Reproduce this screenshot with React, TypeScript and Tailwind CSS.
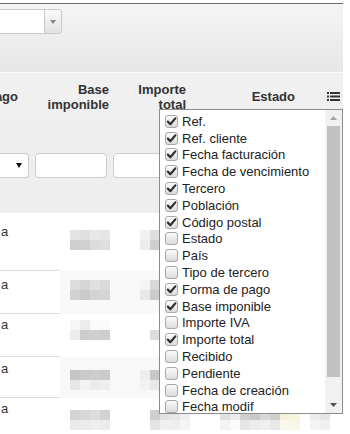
import React from "react";

const ITEMS: [string, boolean][] = [
  ["Ref.", true],
  ["Ref. cliente", true],
  ["Fecha facturación", true],
  ["Fecha de vencimiento", true],
  ["Tercero", true],
  ["Población", true],
  ["Código postal", true],
  ["Estado", false],
  ["País", false],
  ["Tipo de tercero", false],
  ["Forma de pago", true],
  ["Base imponible", true],
  ["Importe IVA", false],
  ["Importe total", true],
  ["Recibido", false],
  ["Pendiente", false],
  ["Fecha de creación", false],
  ["Fecha modif", false],
];

type Row = {
  h: string;
  bg: string;
  textPt: string;
  blkPt: string;
  groups: { ml: string; cells: string[][] }[];
};

const ROWS: Row[] = [
  {
    h: "h-[58px]",
    bg: "bg-white",
    textPt: "pt-[11px]",
    blkPt: "pt-[17px]",
    groups: [
      { ml: "ml-[10px]", cells: [["#e3e3e3", "#e0e0e0", "#e8e8e8", "#e5e5e5"], ["#cecece", "#d0d0d0", "#dcdcdc", "#dedede"]] },
      { ml: "ml-[30px]", cells: [["#f2f2f2", "#dedede", "#e4e4e4", "#ececec"], ["#ececec", "#cfcfcf", "#dadada", "#e6e6e6"]] },
      { ml: "ml-[40px]", cells: [["#e6e6e6", "#dddddd", "#d6d6d6", "#e2e2e2"], ["#f0f0f0", "#e9e9e9", "#e4e4e4", "#eeeeee"]] },
    ],
  },
  {
    h: "h-[43px]",
    bg: "bg-[#f8f8f8]",
    textPt: "pt-[6px]",
    blkPt: "pt-[9px]",
    groups: [
      { ml: "ml-[10px]", cells: [["#dcdcdc", "#d5d5d5", "#e0e0e0", "#dadada"], ["#d2d2d2", "#cbcbcb", "#d6d3d0", "#d5d5d5"]] },
      { ml: "ml-[30px]", cells: [["#f4f4f4", "#d8d8d8", "#e2e2e2", "#ececec"], ["#e8e8e8", "#cccccc", "#d9d9d9", "#e4e4e4"]] },
      { ml: "ml-[40px]", cells: [["#e6e6e6", "#dddddd", "#d6d6d6", "#e2e2e2"], ["#f0f0f0", "#e9e9e9", "#e4e4e4", "#eeeeee"]] },
    ],
  },
  {
    h: "h-[43px]",
    bg: "bg-white",
    textPt: "pt-[3px]",
    blkPt: "pt-[6px]",
    groups: [
      { ml: "ml-[10px]", cells: [["#f6f6f6", "#ececec", "#fafafa", "#fafafa"], ["#ececec", "#cccccc", "#cfcfcf", "#cdcdcd"]] },
      { ml: "ml-[40px]", cells: [["#ffffff", "#f0f0f0", "#f2f2f2", "#f6f6f6"], ["#dddddd", "#e6e6e6", "#ececec", "#f0f0f0"]] },
      { ml: "ml-[30px]", cells: [["#e6e6e6", "#dddddd", "#d6d6d6", "#e2e2e2"], ["#f0f0f0", "#e9e9e9", "#e4e4e4", "#eeeeee"]] },
    ],
  },
  {
    h: "h-[41px]",
    bg: "bg-[#f8f8f8]",
    textPt: "pt-[4px]",
    blkPt: "pt-[13px]",
    groups: [
      { ml: "ml-[10px]", cells: [["#c6c6c6", "#c9c9c9", "#cdcbcb", "#cacaca"], ["#e6e6e6", "#f2f2f2", "#ebebeb", "#eeeeee"]] },
      { ml: "ml-[30px]", cells: [["#eeeeee", "#c8c8c8", "#d8d8d8", "#e2e2e2"], ["#f2f2f2", "#e8e8e8", "#ececec", "#f0f0f0"]] },
      { ml: "ml-[40px]", cells: [["#e6e6e6", "#dddddd", "#d6d6d6", "#e2e2e2"], ["#f0f0f0", "#e9e9e9", "#e4e4e4", "#eeeeee"]] },
    ],
  },
  {
    h: "h-[40px]",
    bg: "bg-white",
    textPt: "pt-[3px]",
    blkPt: "pt-[12px]",
    groups: [
      { ml: "ml-[10px]", cells: [["#d4d4d4", "#d7d7d7", "#dcdcdc", "#d2d2d2"], ["#eaeaea", "#ebebeb", "#eeeeee", "#ebebeb"]] },
      { ml: "ml-[40px]", cells: [["#cfcfcf", "#e2e2e2", "#e6e6e6", "#efefef"], ["#e4e4e4", "#f0f0f0", "#eeeeee", "#f4f4f4"]] },
      {
        ml: "ml-[30px]",
        cells: [
          ["#e0e0e0", "#ececec", "#d0d0d0", "#c8c8c8", "#d8d8d8", "#cfcfcf", "#f5f2dc", "#f6f3de"],
          ["#f3f3f3", "#fafafa", "#e6e6e6", "#ececec", "#efefef", "#e8e8e8", "#faf8ea", "#f8f6e6"],
        ],
      },
      { ml: "ml-[10px]", cells: [["#ececec", "#e4e4e4"], ["#f4f4f4", "#f0f0f0"]] },
    ],
  },
];

function Blocks({ cells }: { cells: string[][] }) {
  return (
    <div className="flex flex-col">
      {cells.map((r, i) => (
        <div key={i} className="flex">
          {r.map((c, j) => (
            <div key={j} className="w-[10px] h-[10px]" style={{ backgroundColor: c }} />
          ))}
        </div>
      ))}
    </div>
  );
}

function Check({ on }: { on: boolean }) {
  return (
    <div className="w-[13px] h-[13px] shrink-0 rounded-[3px] border border-[#a8a8a8] bg-gradient-to-b from-[#fbfbfb] to-[#dcdcdc] flex items-center justify-center">
      {on && (
        <svg width="11" height="11" viewBox="0 0 11 11">
          <path d="M1.8 5.6 L4.3 8.2 L9.3 2.4" fill="none" stroke="#2e2e2e" strokeWidth="2.2" strokeLinecap="round" strokeLinejoin="round" />
        </svg>
      )}
    </div>
  );
}

export default function App() {
  return (
    <div className="relative w-[350px] h-[434px] overflow-hidden bg-white text-[13px] leading-[15px] text-[#333] font-['Liberation_Sans',Arial,sans-serif]">
      <div className="w-[343px]">
        <div className="h-[3px] bg-white" />
        <div className="h-[1px] bg-[#6a6a6a]" />
        <div className="h-[68px] bg-gradient-to-b from-[#f4f4f4] to-[#e7e7e7] pt-[5px]">
          <div className="flex w-[62px] h-[25px] border border-l-0 border-[#c9c9c9] rounded-r-[4px] overflow-hidden">
            <div className="w-[44px] bg-white" />
            <div className="flex-1 border-l border-[#c9c9c9] bg-gradient-to-b from-[#fafafa] to-[#e2e2e2] flex items-center justify-center">
              <svg width="6" height="4" viewBox="0 0 6 4">
                <path d="M0 0H6L3 4Z" fill="#858585" />
              </svg>
            </div>
          </div>
        </div>
        <div className="h-[1px] bg-[#fafafa]" />
        <div className="h-[47px] bg-[#f0f0f0] flex items-center font-bold text-[#333]">
          <div className="w-[20px] flex justify-end overflow-hidden whitespace-nowrap pr-[2px]">
            <span>Forma de pago</span>
          </div>
          <div className="w-[90px] text-right pr-[1px]">
            Base
            <br />
            imponible
          </div>
          <div className="w-[77px] text-right pr-[1px]">
            Importe
            <br />
            total
          </div>
          <div className="w-[108px] text-right">Estado</div>
          <div className="flex-1 flex justify-end pr-[3px]">
            <svg width="13" height="9" viewBox="0 0 13 9">
              <rect x="0" y="0" width="2" height="2" fill="#333" />
              <rect x="3" y="0" width="10" height="2" fill="#333" />
              <rect x="0" y="3.5" width="2" height="2" fill="#333" />
              <rect x="3" y="3.5" width="10" height="2" fill="#333" />
              <rect x="0" y="7" width="2" height="2" fill="#333" />
              <rect x="3" y="7" width="10" height="2" fill="#333" />
            </svg>
          </div>
        </div>
        <div className="h-[93px] bg-[#eeeeee] flex items-start pt-[33px] gap-[6px]">
          <div className="w-[29px] h-[25px] bg-white border border-l-0 border-[#cccccc] rounded-r-[4px] flex items-center justify-end pr-[6px]">
            <svg width="6" height="5" viewBox="0 0 6 5">
              <path d="M0 0H6L3 5Z" fill="#111" />
            </svg>
          </div>
          <div className="w-[72px] h-[25px] bg-white border border-[#cccccc] rounded-[4px]" />
          <div className="w-[72px] h-[25px] bg-white border border-[#cccccc] rounded-[4px]" />
        </div>
        {ROWS.map((r, i) => (
          <div key={i} className={`flex ${r.h}`}>
            <div className={`w-[60px] h-full bg-white border-b border-[#dcdcdc] pl-[1px] ${r.textPt}`}>a</div>
            <div className={`flex-1 h-full flex items-start ${r.bg} ${r.blkPt}`}>
              {r.groups.map((g, k) => (
                <div key={k} className={g.ml}>
                  <Blocks cells={g.cells} />
                </div>
              ))}
            </div>
          </div>
        ))}
      </div>

      <div className="absolute left-[159px] top-[109px] w-[184px] h-[305px] border border-[#8c8c8c] bg-white flex text-[#222]">
        <div className="flex-1 overflow-hidden pt-[3px] pl-[5px]">
          {ITEMS.map(([label, on]) => (
            <div key={label} className="h-[16.8px] flex items-center">
              <Check on={on} />
              <span className="ml-[4px] whitespace-nowrap">{label}</span>
            </div>
          ))}
        </div>
        <div className="w-[17px] h-full bg-[#f1f1f1] flex flex-col">
          <div className="h-[16px] flex items-center justify-center">
            <svg width="7" height="4" viewBox="0 0 7 4">
              <path d="M0 4H7L3.5 0Z" fill="#a3a3a3" />
            </svg>
          </div>
          <div className="h-[251px] mx-[2px] bg-[#c1c1c1]" />
          <div className="flex-1" />
          <div className="h-[16px] flex items-center justify-center">
            <svg width="7" height="4" viewBox="0 0 7 4">
              <path d="M0 0H7L3.5 4Z" fill="#505050" />
            </svg>
          </div>
        </div>
      </div>
    </div>
  );
}
